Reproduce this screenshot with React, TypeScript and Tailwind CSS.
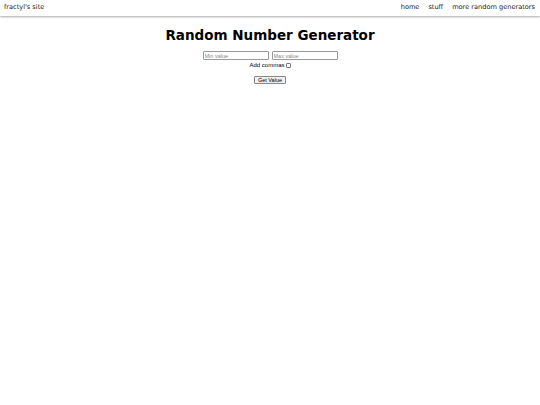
import React from "react";

export default function App() {
  return (
    <div className="w-[540px] h-[405px] bg-white" style={{ fontFamily: '"DejaVu Sans", sans-serif' }}>
      <nav className="h-[16px] flex items-center justify-between pl-[4px] pr-[5px] bg-white shadow-[0_1px_2px_rgba(0,0,0,0.35)] text-[6.6px] text-[#222]">
        <span>fractyl's site</span>
        <div className="flex gap-[9px]">
          <span>home</span>
          <span>stuff</span>
          <span>more random generators</span>
        </div>
      </nav>
      <div className="flex flex-col items-center">
        <h1 className="mt-[10px] text-[13.5px] font-bold leading-[18px] text-black">Random Number Generator</h1>
        <div className="mt-[7px] flex gap-[3px]" style={{ fontFamily: '"Liberation Sans", sans-serif' }}>
          <input placeholder="Min value" className="w-[66px] h-[9px] border border-[#999] rounded-[1px] px-[1px] text-[5.5px] leading-[7px] placeholder:text-[#888] outline-none" />
          <input placeholder="Max value" className="w-[66px] h-[9px] border border-[#999] rounded-[1px] px-[1px] text-[5.5px] leading-[7px] placeholder:text-[#888] outline-none" />
        </div>
        <div className="mt-[1px] flex items-center gap-[1px] text-[6px] leading-[8px] text-black" style={{ fontFamily: '"Liberation Sans", sans-serif' }}>
          <span>Add commas</span>
          <input type="checkbox" className="appearance-none w-[5px] h-[5px] border border-[#777] rounded-[1px] bg-white" />
        </div>
        <button className="mt-[7px] h-[8px] px-[3px] border border-[#888] rounded-[1px] bg-[#efefef] text-[5.5px] leading-[6px] text-black" style={{ fontFamily: '"Liberation Sans", sans-serif' }}>Get Value</button>
      </div>
    </div>
  );
}
